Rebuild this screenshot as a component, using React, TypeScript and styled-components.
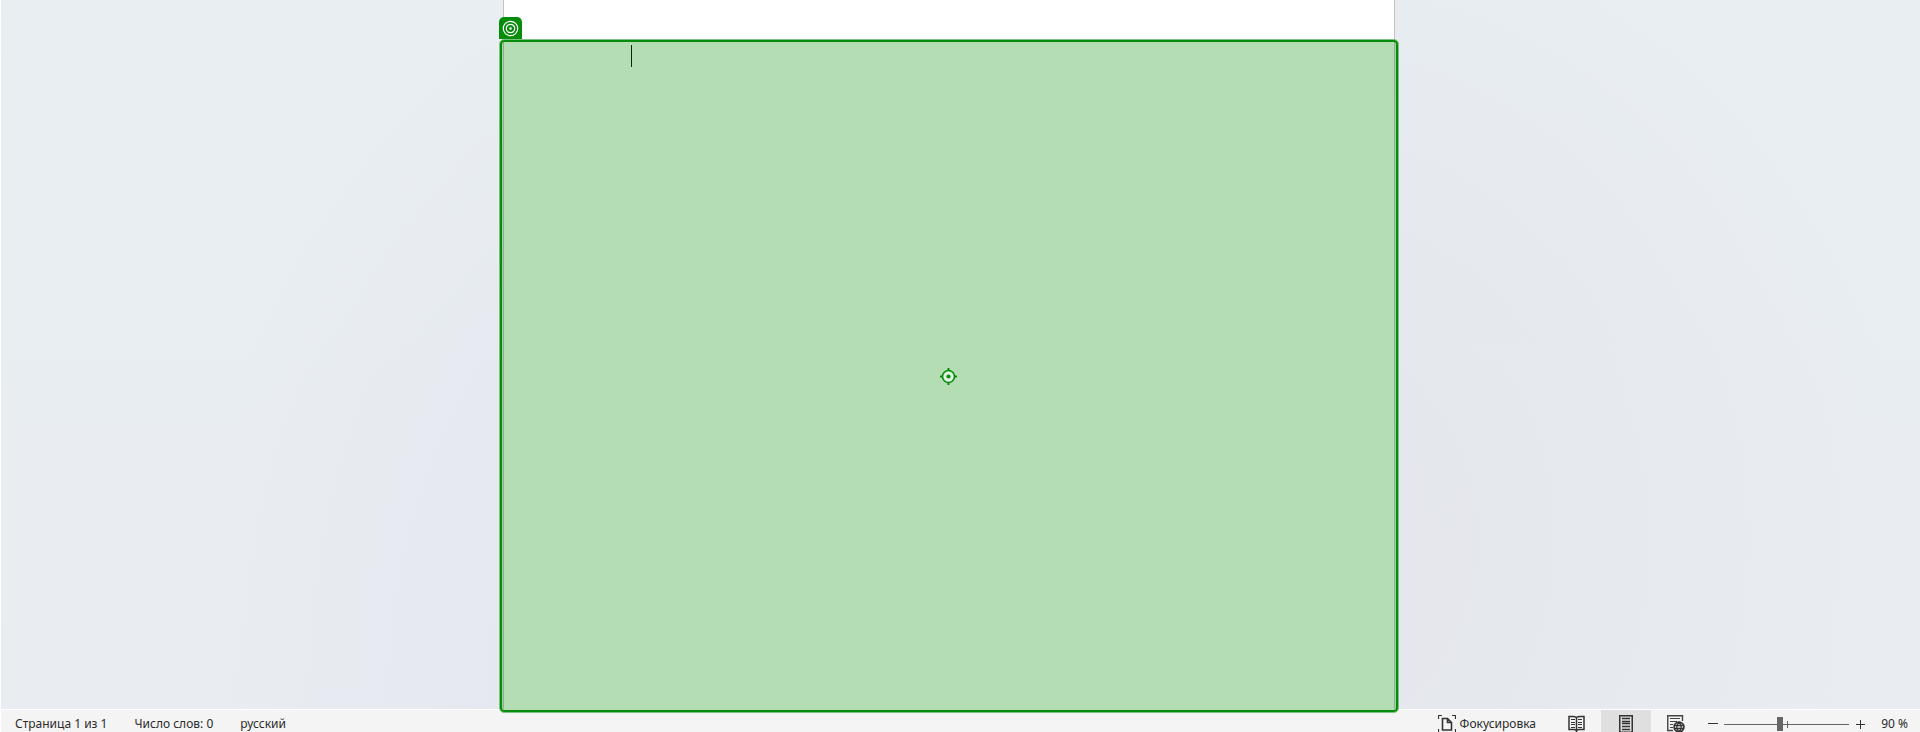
import React, { useState } from "react";
import styled, { createGlobalStyle } from "styled-components";

const GlobalStyle = createGlobalStyle`
  *, *::before, *::after { box-sizing: border-box; }
  body { margin: 0; background: #fff; color: #2b2b2b; font: 12px/18px "Noto Sans", sans-serif; }
`;

const Window = styled.div`
  display: flex;
  flex-direction: column;
  height: 100vh;
  padding-left: 1px;
  overflow: hidden;
`;

const Canvas = styled.main`
  flex: 1;
  display: flex;
  justify-content: center;
  padding-right: 24px;
  border-bottom: 1px solid #fff;
  background:
    radial-gradient(ellipse 27% 110% at 37% 100%, #e2e5ee, rgba(226, 229, 238, 0) 100%),
    radial-gradient(ellipse 32% 95% at 67% 76%, #e3e5ea, rgba(227, 229, 234, 0) 100%),
    linear-gradient(#e8eef2, #e9edf2);
`;

const Page = styled.article`
  position: relative;
  width: 892px;
  background: #fff;
  border: solid #c3c4c6;
  border-width: 0 1px;
`;

const Caret = styled.span`
  position: absolute;
  left: 127px;
  top: 45px;
  width: 1px;
  height: 22px;
  z-index: 2;
  background: #05290a;
`;

const Selection = styled.div`
  position: absolute;
  inset: 39px -5px -4px;
  z-index: 1;
  display: grid;
  place-items: center;
  border: 1px solid #7cc381;
  border-radius: 5px;
  background: rgba(8, 143, 8, 0.3);
  box-shadow: inset 0 0 0 2px #068c0b;
`;

const Badge = styled.div`
  position: absolute;
  left: -1px;
  top: -23px;
  width: 23px;
  height: 22px;
  display: grid;
  place-items: center;
  border-radius: 5px 5px 0 0;
  background: #068c0b;
`;

const StatusBar = styled.footer`
  display: flex;
  justify-content: space-between;
  height: 22px;
  padding: 0 12px 0 14px;
  background: #f4f4f4;
`;

const Group = styled.div`
  display: flex;
  align-items: center;
  height: 28px;
`;

const Info = styled(Group)`
  gap: 27px;
`;

const Button = styled.button`
  display: flex;
  align-items: center;
  justify-content: center;
  gap: 4px;
  height: 28px;
  padding: 0;
  border: 0;
  background: none;
  color: inherit;
  font: inherit;
`;

const FocusButton = styled(Button)`
  margin-right: 15px;
`;

const ViewButton = styled(Button)<{ $active?: boolean }>`
  width: 50px;
  background: ${(p) => (p.$active ? "#dfdfdf" : "transparent")};
`;

const StepButton = styled(Button)`
  width: 23px;
`;

const SliderBox = styled.div`
  position: relative;
  display: flex;
  width: 125px;
  height: 14px;

  &::before {
    content: "";
    position: absolute;
    left: 50%;
    top: 4px;
    width: 1px;
    height: 7px;
    background: #666;
  }
`;

const Slider = styled.input`
  appearance: none;
  position: relative;
  width: 100%;
  height: 14px;
  margin: 0;
  background: linear-gradient(#666, #666) center / 100% 1px no-repeat;

  &::-webkit-slider-thumb {
    appearance: none;
    width: 6px;
    height: 14px;
    background: #666;
  }
`;

const Percent = styled.output`
  width: 36px;
  text-align: right;
`;

const TargetIcon = () => (
  <svg width="17" height="17" viewBox="0 0 17 17" fill="none" stroke="#fff" aria-hidden="true">
    <circle cx="8.5" cy="8.5" r="7.2" strokeWidth="1.2" />
    <circle cx="8.5" cy="8.5" r="4.2" strokeWidth="1.2" />
    <circle cx="8.5" cy="8.5" r="1.2" fill="#fff" stroke="none" />
  </svg>
);

const CrosshairIcon = () => (
  <svg width="17" height="17" viewBox="0 0 17 17" aria-hidden="true">
    <path d="M8.5 0v17M0 8.5h17" stroke="#068c0b" strokeWidth="2" />
    <circle cx="8.5" cy="8.5" r="6" fill="#e0f2e0" stroke="#068c0b" strokeWidth="1.6" />
    <circle cx="8.5" cy="8.5" r="2.1" fill="#068c0b" />
  </svg>
);

const FocusIcon = () => (
  <svg width="18" height="18" viewBox="0 0 18 18" fill="none" stroke="#333" aria-hidden="true">
    <path d="M.5 4V.5H4M14 .5h3.500V4M.5 14v3.500H4M14 17.500h3.500V14" strokeWidth="1.200" />
    <path d="M4.500 3.500h5l4 4v7.500h-9zM9.500 3.500v4h4" strokeWidth="1.600" />
  </svg>
);

const ReadIcon = () => (
  <svg width="17" height="18" viewBox="0 0 17 18" fill="none" stroke="#333" aria-hidden="true">
    <path d="M8.500 2.500Q7 1.500 5 1.500H1v13H6q2 0 2.500 1.500Q9 14.500 11 14.500h5v-13H12Q10 1.500 8.500 2.500V17" strokeWidth="1.500" />
    <path d="M3 4.500h4M3 7.500h4M3 9.500h4M3 12.500h4M10 4.500h4M10 7.500h4M10 9.500h4M10 12.500h4" strokeWidth="1.200" />
  </svg>
);

const PrintIcon = () => (
  <svg width="14" height="18" viewBox="0 0 14 18" fill="none" stroke="#333" aria-hidden="true">
    <path d="M.75.75h12.500v16.500H.75z" strokeWidth="1.500" />
    <path d="M3 3.500h8M3 6.500h8M3 8.500h8M3 11.500h8M3 14.500h8" strokeWidth="1.300" />
  </svg>
);

const WebIcon = () => (
  <svg width="18" height="18" viewBox="0 0 18 18" fill="none" stroke="#444" aria-hidden="true">
    <path d="M6 15.500H.75V.75h14.750V6" strokeWidth="1.400" />
    <path d="M3 3.500h10M3 6.500h7M3 9.500h3M3 12.500h3" strokeWidth="1.200" />
    <circle cx="12" cy="12" r="5" strokeWidth="1.600" fill="#bbb" stroke="#333" />
    <path d="M12 7Q7.500 12 12 17Q16.500 12 12 7M7.500 10.500h9M7.500 13.500h9" strokeWidth="1.200" stroke="#333" />
  </svg>
);

const MinusIcon = () => (
  <svg width="10" height="9" viewBox="0 0 10 9" stroke="#333" aria-hidden="true">
    <path d="M0 3.500h10" />
  </svg>
);

const PlusIcon = () => (
  <svg width="9" height="9" viewBox="0 0 9 9" stroke="#333" aria-hidden="true">
    <path d="M0 4.500h9M4.500 0v9" />
  </svg>
);

export default function App() {
  const [zoom, setZoom] = useState(90);
  const [view, setView] = useState("print");
  const views = [
    { id: "read", label: "Режим чтения", Icon: ReadIcon },
    { id: "print", label: "Разметка страницы", Icon: PrintIcon },
    { id: "web", label: "Веб-документ", Icon: WebIcon },
  ];
  return (
    <>
      <GlobalStyle />
      <Window>
        <Canvas>
          <Page>
            <Caret />
            <Selection>
              <Badge><TargetIcon /></Badge>
              <CrosshairIcon />
            </Selection>
          </Page>
        </Canvas>
        <StatusBar>
          <Info>
            <span>Страница 1 из 1</span>
            <span>Число слов: 0</span>
            <span>русский</span>
          </Info>
          <Group>
            <FocusButton><FocusIcon />Фокусировка</FocusButton>
            {views.map(({ id, label, Icon }) => (
              <ViewButton key={id} aria-label={label} $active={view === id} onClick={() => setView(id)}>
                <Icon />
              </ViewButton>
            ))}
            <StepButton aria-label="Уменьшить" onClick={() => setZoom(Math.max(10, zoom - 10))}><MinusIcon /></StepButton>
            <SliderBox>
              <Slider type="range" aria-label="Масштаб" min={10} max={190} value={zoom} onChange={(e) => setZoom(Number(e.target.value))} />
            </SliderBox>
            <StepButton aria-label="Увеличить" onClick={() => setZoom(Math.min(190, zoom + 10))}><PlusIcon /></StepButton>
            <Percent>{zoom} %</Percent>
          </Group>
        </StatusBar>
      </Window>
    </>
  );
}
